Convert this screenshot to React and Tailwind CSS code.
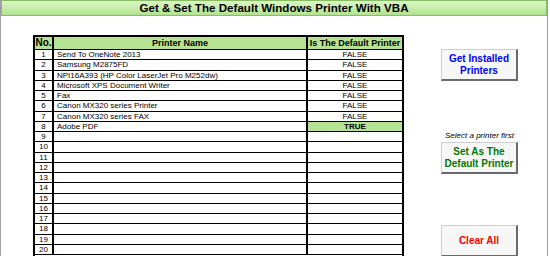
import React from 'react';

const printers = [
  { name: 'Send To OneNote 2013', value: 'FALSE' },
  { name: 'Samsung M2875FD', value: 'FALSE' },
  { name: 'NPI16A393 (HP Color LaserJet Pro M252dw)', value: 'FALSE' },
  { name: 'Microsoft XPS Document Writer', value: 'FALSE' },
  { name: 'Fax', value: 'FALSE' },
  { name: 'Canon MX320 series Printer', value: 'FALSE' },
  { name: 'Canon MX320 series FAX', value: 'FALSE' },
  { name: 'Adobe PDF', value: 'TRUE' },
];

const rows = Array.from({ length: 20 }, (_, i) => printers[i] || { name: '', value: '' });

const SheetButton = ({ children, color }) => (
  <button
    className={`w-[77px] h-[32px] bg-[#f7f7f7] border border-t-[#d0d0d0] border-l-[#d0d0d0] border-r-2 border-b-2 border-r-[#6a6a6a] border-b-[#6a6a6a] text-[10px] font-bold leading-[12px] whitespace-nowrap ${color}`}
  >
    {children}
  </button>
);

const App = () => {
  return (
    <div className="w-[550px] h-[256px] overflow-hidden bg-white font-['Liberation_Sans',Arial,sans-serif] text-black">
      <div className="w-[548px] h-[256px] border-x border-[#a0a0a0]">
        {/* Title bar */}
        <div className="h-[16px] border border-[#86bf62] bg-gradient-to-b from-[#dcf6c8] to-[#b2e28e] flex items-center justify-center">
          <span className="text-[11.6px] font-bold leading-none">Get &amp; Set The Default Windows Printer With VBA</span>
        </div>

        <div className="flex pl-[32px] pt-[19px]">
          {/* Printer table */}
          <div className="w-[371px] border-2 border-b-0 border-black flex flex-col">
            <div className="flex h-[13px] bg-[#b6e393] border-b border-black">
              <div className="w-[19px] border-r-2 border-black text-[10px] font-bold leading-[12px] text-center">No.</div>
              <div className="w-[254px] border-r-2 border-black text-[9px] font-bold leading-[12px] text-center">Printer Name</div>
              <div className="flex-1 text-[9px] font-bold leading-[12px] text-center whitespace-nowrap">Is The Default Printer</div>
            </div>
            {rows.map((row, i) => (
              <div key={i} className="flex h-[10.25px] border-b border-black">
                <div className="w-[19px] border-r-2 border-black text-[8px] leading-[9px] text-center">{i + 1}</div>
                <div className="w-[254px] border-r-2 border-black text-[8px] leading-[9px] px-[3px] whitespace-nowrap overflow-hidden">
                  {row.name}
                </div>
                <div
                  className={`flex-1 text-[8px] leading-[9px] text-center ${
                    row.value === 'TRUE' ? 'bg-[#b6e393] font-bold' : ''
                  }`}
                >
                  {row.value}
                </div>
              </div>
            ))}
          </div>

          {/* Buttons */}
          <div className="flex flex-col ml-[37px]">
            <div className="mt-[14px]">
              <SheetButton color="text-[#0000ff]">
                Get Installed
                <br />
                Printers
              </SheetButton>
            </div>
            <div className="mt-[50px] text-[8px] italic leading-[10px] text-center w-[77px] whitespace-nowrap">Select a printer first</div>
            <div className="mt-[1px]">
              <SheetButton color="text-[#007a00]">
                Set As The
                <br />
                Default Printer
              </SheetButton>
            </div>
            <div className="mt-[51px]">
              <SheetButton color="text-[#ff0000]">Clear All</SheetButton>
            </div>
          </div>
        </div>
      </div>
    </div>
  );
};

export default App;
